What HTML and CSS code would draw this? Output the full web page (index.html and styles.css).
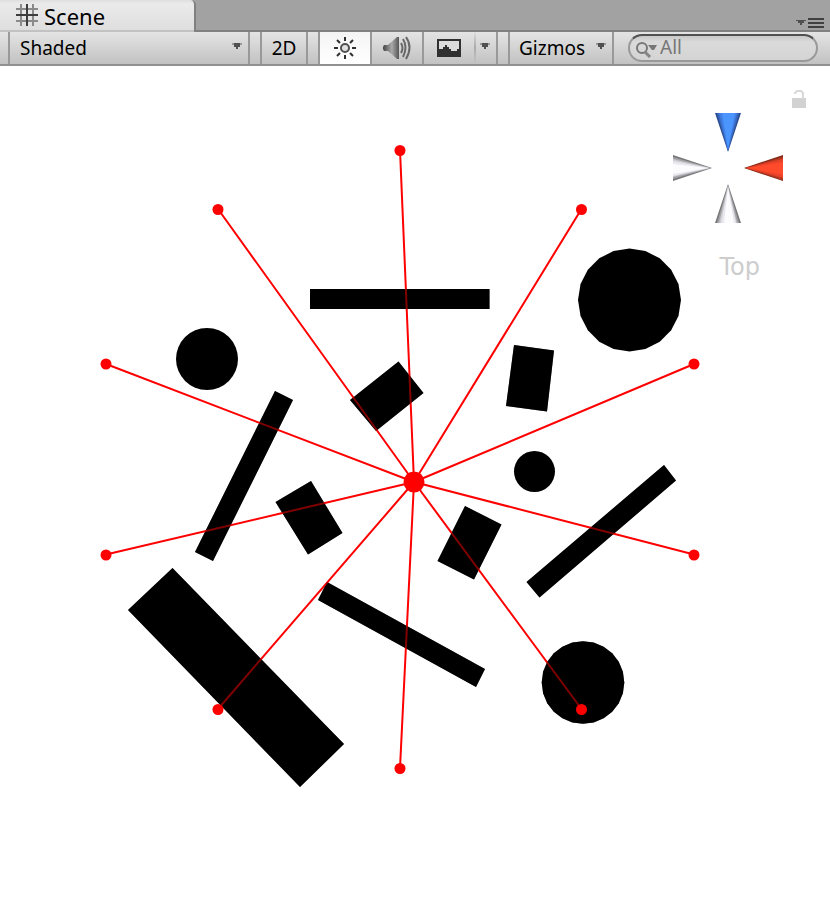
FILE: index.html
```html
<!DOCTYPE html>
<html lang="en">
<head>
<meta charset="utf-8">
<title>Scene</title>
<link rel="stylesheet" href="styles.css">
</head>
<body>
<header class="tabs">
  <button class="tab" type="button">
    <svg class="tab-icon" width="22" height="22" viewBox="0 0 22 22" aria-hidden="true">
      <path d="M5 0v22M17 0v22M0 5h22M0 17h22" stroke="#8a8a8a" stroke-width="2"/>
      <path d="M11 0v22M0 11h22" stroke="#3c3c3c" stroke-width="2"/>
    </svg>
    <span>Scene</span>
  </button>
  <button class="pane-menu" type="button" aria-label="Pane options">
    <svg width="28" height="10" viewBox="0 0 28 10" aria-hidden="true">
      <path d="M0 2h10v1H8v2H6v2H4V5H2V3H0z" fill="#505050"/>
      <path d="M12 1h16M12 5h16M12 9h16" stroke="#404040" stroke-width="2"/>
    </svg>
  </button>
</header>
<nav class="toolbar" aria-label="Scene tools">
  <div class="pick pick-mode">
    <select aria-label="Draw mode"><option>Shaded</option></select>
    <svg class="arrow" width="10" height="6" viewBox="0 0 10 6" aria-hidden="true"><path d="M0 0h10v2H0z" fill="#999"/><path d="M2 0h6v4H6v2H4V4H2z" fill="#505050"/></svg>
  </div>
  <button class="tool tool-2d" type="button">2D</button>
  <div class="group">
    <button class="tool tool-on" type="button" aria-label="Lighting" aria-pressed="true">
      <svg width="24" height="24" viewBox="0 0 24 24" aria-hidden="true">
        <circle cx="12" cy="12" r="4" fill="#e0e0e0" stroke="#505050" stroke-width="2"/>
        <path d="M12 1v4M12 19v4M1 12h4M19 12h4M4 4l3 3M17 17l3 3M4 20l3-3M17 7l3-3" stroke="#303030" stroke-width="2"/>
      </svg>
    </button>
    <button class="tool tool-audio" type="button" aria-label="Audio">
      <svg width="28" height="24" viewBox="0 0 28 24" aria-hidden="true">
        <defs><linearGradient id="cone"><stop stop-color="#444"/><stop offset=".55" stop-color="#aaa"/><stop offset="1" stop-color="#555"/></linearGradient></defs>
        <path d="M1 9h4l9-8h2v22h-2l-9-8H1l-1-2v-2z" fill="url(#cone)"/>
        <path d="M18 7q3 5 0 10M20 3q5 8 0 18M23 1q7 10 0 22" fill="none" stroke="#686868" stroke-width="2"/>
      </svg>
    </button>
    <button class="tool tool-fx" type="button" aria-label="Effects">
      <svg width="24" height="18" viewBox="0 0 24 18" aria-hidden="true">
        <path d="M0 0h24v18H0z" fill="#303030"/>
        <path d="M2 2h20v8h-2v2h-6v-2h-2V8h-2V6H8v2H6v2H2z" fill="#dcdcdc"/>
      </svg>
    </button>
    <button class="tool tool-more" type="button" aria-label="Effects options">
      <svg width="10" height="6" viewBox="0 0 10 6" aria-hidden="true"><path d="M0 0h10v2H0z" fill="#999"/><path d="M2 0h6v4H6v2H4V4H2z" fill="#505050"/></svg>
    </button>
  </div>
  <button class="tool tool-gizmos" type="button">
    <span>Gizmos</span>
    <svg width="10" height="6" viewBox="0 0 10 6" aria-hidden="true"><path d="M0 0h10v2H0z" fill="#999"/><path d="M2 0h6v4H6v2H4V4H2z" fill="#505050"/></svg>
  </button>
  <label class="search">
    <svg width="24" height="18" viewBox="0 0 24 18" aria-hidden="true">
      <circle cx="7" cy="7" r="5" fill="none" stroke="#787878" stroke-width="2"/>
      <path d="M10 11l5 5" stroke="#858585" stroke-width="3"/>
      <path d="M13 4h9l-3 5h-2z" fill="#777"/>
    </svg>
    <input type="text" aria-label="Search" placeholder="All">
  </label>
</nav>
<main class="stage">
  <svg class="scene" viewBox="0 66 830 832" role="img" aria-label="Rays from a light source to ten targets">
    <defs>
      <g id="blocks">
        <path d="M310 289H489.500V309H310zM398.500 361.500L423.500 393L376 431L350 400zM514 345L554 350.500L547 411.500L506 406zM465 506L501.500 524.500L474 579.500L437.500 561zM311 481L342.500 533L308 554.500L275.500 502zM275 391L293 400L213 561L195 552zM664 465L676 480.500L539.500 597.500L526.500 582zM327 582L485 669L476 687L318 600zM172.500 568L344 744L300 787L128 610z"/>
        <polygon transform="translate(583 682.500) scale(.413)" points="100,0 96.6,25.9 86.6,50 70.7,70.7 50,86.6 25.9,96.6 0,100 -25.9,96.6 -50,86.6 -70.7,70.7 -86.6,50 -96.6,25.9 -100,0 -96.6,-25.9 -86.6,-50 -70.7,-70.7 -50,-86.6 -25.9,-96.6 0,-100 25.9,-96.6 50,-86.6 70.7,-70.7 86.6,-50 96.6,-25.9"/>
      </g>
    </defs>
    <circle cx="207" cy="359" r="31"/>
    <circle cx="534.500" cy="471.500" r="20.500"/>
    <polygon transform="translate(629.500 300) scale(.515)" points="100,0 95.1,30.9 80.9,58.8 58.8,80.9 30.9,95.1 0,100 -30.9,95.1 -58.8,80.9 -80.9,58.8 -95.1,30.9 -100,0 -95.1,-30.9 -80.9,-58.8 -58.8,-80.9 -30.9,-95.1 0,-100 30.9,-95.1 58.8,-80.9 80.9,-58.8 95.1,-30.9"/>
    <use href="#blocks"/>
    <path class="ray" d="M414 482L400 150M414 482L581.500 209M414 482L694 364M414 482L694 554.500M414 482L581.500 709M414 482L400 768M414 482L218 709M414 482L106 554.500M414 482L106 364M414 482L218 209"/>
    <use href="#blocks" class="shade"/>
    <g class="dots">
      <circle cx="414" cy="482" r="10.500"/>
      <circle cx="400" cy="150.500" r="5.500"/>
      <circle cx="581.500" cy="209.500" r="5.500"/>
      <circle cx="694" cy="364" r="5.500"/>
      <circle cx="694" cy="555" r="5.500"/>
      <circle cx="581.500" cy="709.500" r="5.500"/>
      <circle cx="400" cy="768.500" r="5.500"/>
      <circle cx="218" cy="709.500" r="5.500"/>
      <circle cx="106" cy="555" r="5.500"/>
      <circle cx="106" cy="364" r="5.500"/>
      <circle cx="218" cy="209.500" r="5.500"/>
    </g>
  </svg>
  <aside class="compass">
    <button class="lock" type="button" aria-label="Lock rotation">
      <svg width="14" height="18" viewBox="0 0 14 18" aria-hidden="true">
        <path d="M0 8h14v10H0z" fill="#d2d2d2"/>
        <path d="M3 4V3l2-2h4l2 2v6" fill="none" stroke="#d8d8d8" stroke-width="2"/>
      </svg>
    </button>
    <svg class="axes" width="110" height="110" viewBox="0 0 110 110" role="img" aria-label="View axes">
      <defs>
        <g id="gray-cone">
          <path d="M-13 39h26L0 0z" fill="#77777a"/>
          <path d="M-11 39h22L0 1z" fill="#a4a4a8"/>
          <path d="M-9 39H9L0 2z" fill="#cbcbd0"/>
          <path d="M-7 39H8L0 3z" fill="#e8e8ee"/>
          <path d="M-4 39H6L0 4z" fill="#fcfcff"/>
        </g>
      </defs>
      <path d="M42 0h26L55 39z" fill="#2c4f94"/>
      <path d="M44 0h22L55 38z" fill="#3668c0"/>
      <path d="M46 0h18L55 37z" fill="#407fe4"/>
      <path d="M49 0h13L55 36z" fill="#4b95ff"/>
      <path d="M110 42v26L71 55z" fill="#842a1a"/>
      <path d="M110 44v23L72 55z" fill="#bc3820"/>
      <path d="M110 46v19L73 55z" fill="#e84228"/>
      <path d="M110 49v13L74 55z" fill="#ff4a2c"/>
      <use href="#gray-cone" transform="translate(55 71)"/>
      <use href="#gray-cone" transform="translate(39 55) rotate(90)"/>
    </svg>
    <span class="view-name">Top</span>
  </aside>
</main>
</body>
</html>
```
FILE: styles.css
```css
* { box-sizing: border-box; }

body {
  margin: 0;
  min-height: 100vh;
  display: flex;
  flex-direction: column;
  background: #fff;
  color: #000;
  font-family: "Noto Sans", "Open Sans", sans-serif;
}

button, select, input {
  margin: 0;
  padding: 0;
  border: 0;
  border-radius: 0;
  background: none;
  color: inherit;
  font: inherit;
}

svg { display: block; flex: none; }

.tabs {
  display: flex;
  justify-content: space-between;
  height: 32px;
  background: linear-gradient(#a2a2a2 30px, #808080 30px);
}

.tab {
  display: flex;
  align-items: center;
  gap: 6px;
  width: 196px;
  padding: 0 16px;
  border-right: 2px solid #808080;
  border-top-right-radius: 5px;
  background: linear-gradient(#dedede, #ebebeb 4px, #dedede 30px, #c2c2c2 30px);
  font-size: 22px;
  line-height: 30px;
}

.tab-icon { margin-bottom: 2px; }

.pane-menu {
  align-self: flex-end;
  padding: 0 6px 4px 0;
}

.toolbar {
  display: flex;
  height: 34px;
  padding-left: 8px;
  border-bottom: 2px solid #909090;
  background: linear-gradient(#e4e4e4, #c2c2c2);
  font-size: 19px;
}

.pick {
  display: flex;
  align-items: center;
  border: solid #999;
  border-width: 0 2px;
}

.pick-mode {
  flex: none;
  width: 242px;
  padding: 0 6px 0 10px;
}

.pick select {
  flex: 1;
  height: 32px;
  appearance: none;
}

.arrow { margin-bottom: 4px; pointer-events: none; }

.group {
  display: flex;
  flex: none;
  margin-right: 10px;
  border-right: 2px solid #999;
}

.tool {
  display: flex;
  flex: none;
  align-items: center;
  justify-content: center;
}

.tool-2d {
  width: 48px;
  margin: 0 10px;
  border: solid #999;
  border-width: 0 2px;
}

.tool-on {
  width: 54px;
  border: solid #999;
  border-width: 0 2px;
  background: linear-gradient(#f4f4f4, #fff);
}

.tool-audio { width: 52px; border-right: 2px solid #999; }

.tool-fx { width: 50px; }

.tool-more {
  width: 22px;
  padding-right: 2px;
  border-left: 2px solid;
  border-image: linear-gradient(transparent, #aaa, transparent) 1;
}

.tool-more svg, .tool-gizmos svg { margin-bottom: 4px; }

.tool-gizmos {
  justify-content: space-between;
  width: 106px;
  padding: 0 6px 0 9px;
  border: solid #999;
  border-width: 0 2px;
}

.search {
  display: flex;
  flex: 1;
  gap: 1px;
  min-width: 0;
  height: 28px;
  margin: 2px 12px 2px 14px;
  padding: 0 8px 0 5px;
  border: 2px solid #999;
  border-top-color: #505050;
  border-radius: 14px;
  background: linear-gradient(#c8c8c8, #dadada 6px, #d4d4d4);
}

.search svg { margin-top: 5px; }

.search input {
  flex: 1;
  min-width: 0;
  height: 22px;
  outline: 0;
}

.search input::placeholder { color: #777; opacity: 1; }

.stage { position: relative; flex: 1; }

.scene { width: 100%; }

.ray { fill: none; stroke: #f00; stroke-width: 2; }

.shade { opacity: .5; }

.dots { fill: #f00; }

.compass {
  position: absolute;
  top: 24px;
  right: 24px;
  display: flex;
  flex-direction: column;
  align-items: flex-end;
}

.lock { margin-bottom: 5px; }

.axes { margin-right: 23px; }

.view-name {
  margin: 28px 46px 0 0;
  color: #cdcdcd;
  font-family: "DejaVu Sans", sans-serif;
  font-size: 24px;
  line-height: 32px;
}
```
